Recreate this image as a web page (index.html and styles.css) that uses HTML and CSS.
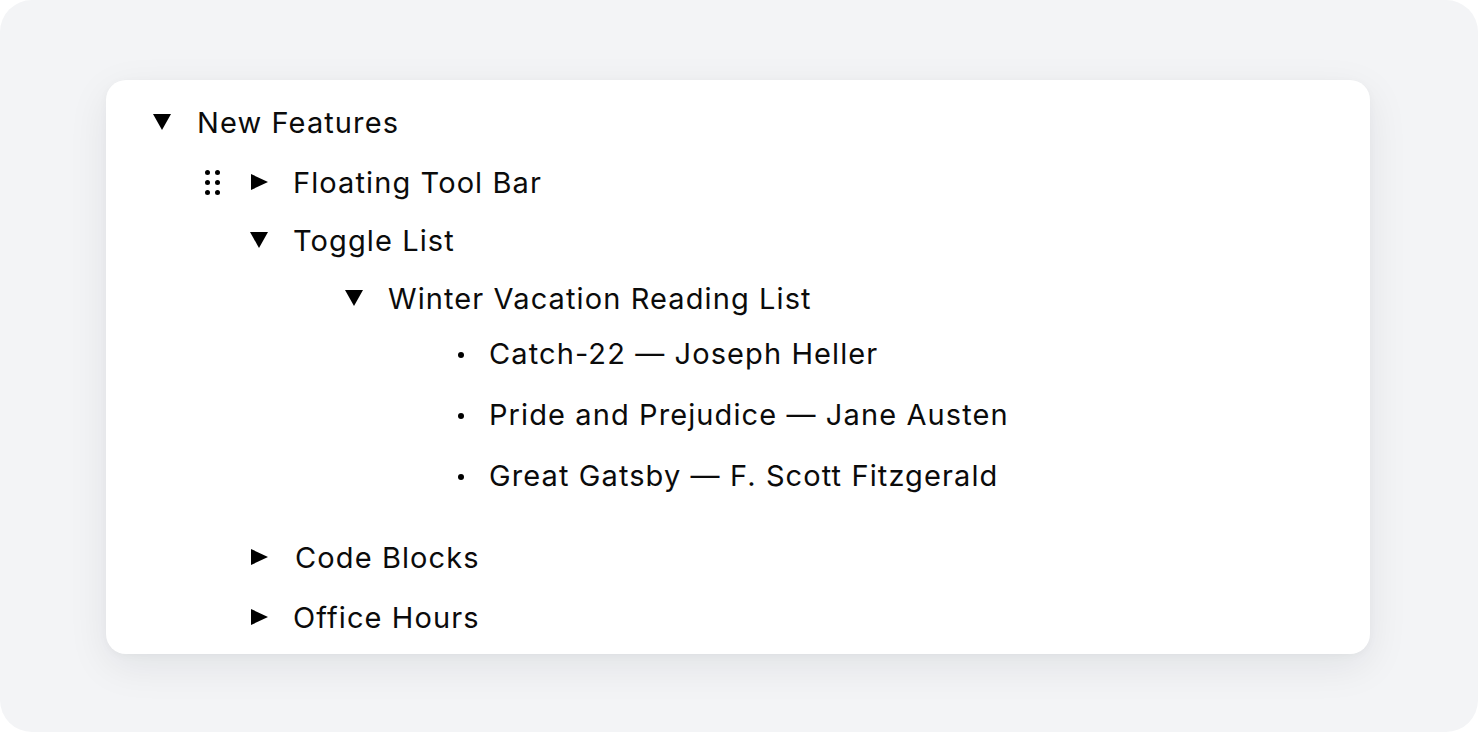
FILE: index.html
```html
<!DOCTYPE html>
<html lang="en">
<head>
<meta charset="utf-8">
<title>Toggle List</title>
<link rel="stylesheet" href="styles.css">
</head>
<body>
<div class="frame">
  <div class="card">
    <div class="block">
      <div class="row row-root">
        <span class="toggle"><svg width="18" height="16" viewBox="0 0 18 16"><polygon points="0,0 18,0 9,16" fill="currentColor"/></svg></span>
        <span class="label">New Features</span>
      </div>
      <div class="children children-root">
        <div class="block">
          <div class="row row-hover">
            <span class="drag"><i></i><i></i><i></i><i></i><i></i><i></i></span>
            <span class="toggle"><svg width="18" height="16" viewBox="0 0 18 16"><polygon points="1,0 18,8 1,16" fill="currentColor"/></svg></span>
            <span class="label">Floating Tool Bar</span>
          </div>
        </div>
        <div class="block">
          <div class="row">
            <span class="toggle"><svg width="18" height="16" viewBox="0 0 18 16"><polygon points="0,0 18,0 9,16" fill="currentColor"/></svg></span>
            <span class="label">Toggle List</span>
          </div>
          <div class="children children-l1">
            <div class="block">
              <div class="row">
                <span class="toggle"><svg width="18" height="16" viewBox="0 0 18 16"><polygon points="0,0 18,0 9,16" fill="currentColor"/></svg></span>
                <span class="label">Winter Vacation Reading List</span>
              </div>
              <ul class="bullets">
                <li class="bullet-item"><span class="dot"></span><span class="label">Catch-22 — Joseph Heller</span></li>
                <li class="bullet-item"><span class="dot"></span><span class="label">Pride and Prejudice — Jane Austen</span></li>
                <li class="bullet-item"><span class="dot"></span><span class="label">Great Gatsby — F. Scott Fitzgerald</span></li>
              </ul>
            </div>
          </div>
        </div>
        <div class="block">
          <div class="row row-tall">
            <span class="toggle"><svg width="18" height="16" viewBox="0 0 18 16"><polygon points="1,0 18,8 1,16" fill="currentColor"/></svg></span>
            <span class="label label-code">Code Blocks</span>
          </div>
        </div>
        <div class="block">
          <div class="row row-tall">
            <span class="toggle"><svg width="18" height="16" viewBox="0 0 18 16"><polygon points="1,0 18,8 1,16" fill="currentColor"/></svg></span>
            <span class="label">Office Hours</span>
          </div>
        </div>
      </div>
    </div>
  </div>
</div>
</body>
</html>
```
FILE: styles.css
```css
* { box-sizing: border-box; }

html, body {
  margin: 0;
  padding: 0;
  background: #ffffff;
}

body {
  font-family: "Inter", "Liberation Sans", sans-serif;
  color: #0b0b0b;
}

.frame {
  width: 1478px;
  height: 732px;
  background: #f3f4f6;
  border-radius: 32px;
  padding: 80px 108px 78px 106px;
}

.card {
  width: 1264px;
  height: 574px;
  background: #ffffff;
  border-radius: 20px;
  box-shadow: 0 12px 40px rgba(17, 24, 39, 0.08), 0 2px 8px rgba(17, 24, 39, 0.03);
  padding: 14px 0 0 47px;
}

.block {
  display: flex;
  flex-direction: column;
}

.row {
  position: relative;
  display: flex;
  align-items: center;
  height: 58px;
}

.row-tall {
  height: 60px;
}

.toggle {
  display: flex;
  align-items: center;
  justify-content: center;
  width: 18px;
  height: 16px;
  margin-top: -3px;
  color: #000;
  flex: none;
}

.toggle svg {
  display: block;
}

.label {
  font-size: 29px;
  letter-spacing: 1.1px;
  line-height: 1.2;
  white-space: nowrap;
  margin-left: 26px;
}

.children-root {
  padding-left: 97px;
  padding-top: 2px;
}

.children-root .label {
  margin-left: 25px;
}

.children-root .label-code {
  margin-left: 27px;
}

.children-l1 {
  padding-left: 95px;
}

.drag {
  position: absolute;
  left: -45px;
  top: 50%;
  margin-top: -13px;
  width: 15px;
  height: 25px;
  display: grid;
  grid-template-columns: 5px 5px;
  grid-template-rows: 5px 5px 5px;
  column-gap: 5px;
  row-gap: 5px;
}

.drag i {
  display: block;
  width: 5px;
  height: 5px;
  border-radius: 50%;
  background: #000;
}

.bullets {
  list-style: none;
  margin: -4px 0 21px 0;
  padding: 0 0 0 107px;
}

.bullet-item {
  display: flex;
  align-items: center;
  height: 61px;
}

.dot {
  flex: none;
  width: 18px;
  height: 6px;
  display: flex;
  justify-content: center;
}

.dot::before {
  content: "";
  width: 6px;
  height: 6px;
  border-radius: 50%;
  background: #000;
}

.bullet-item .label {
  margin-left: 19px;
}
```
